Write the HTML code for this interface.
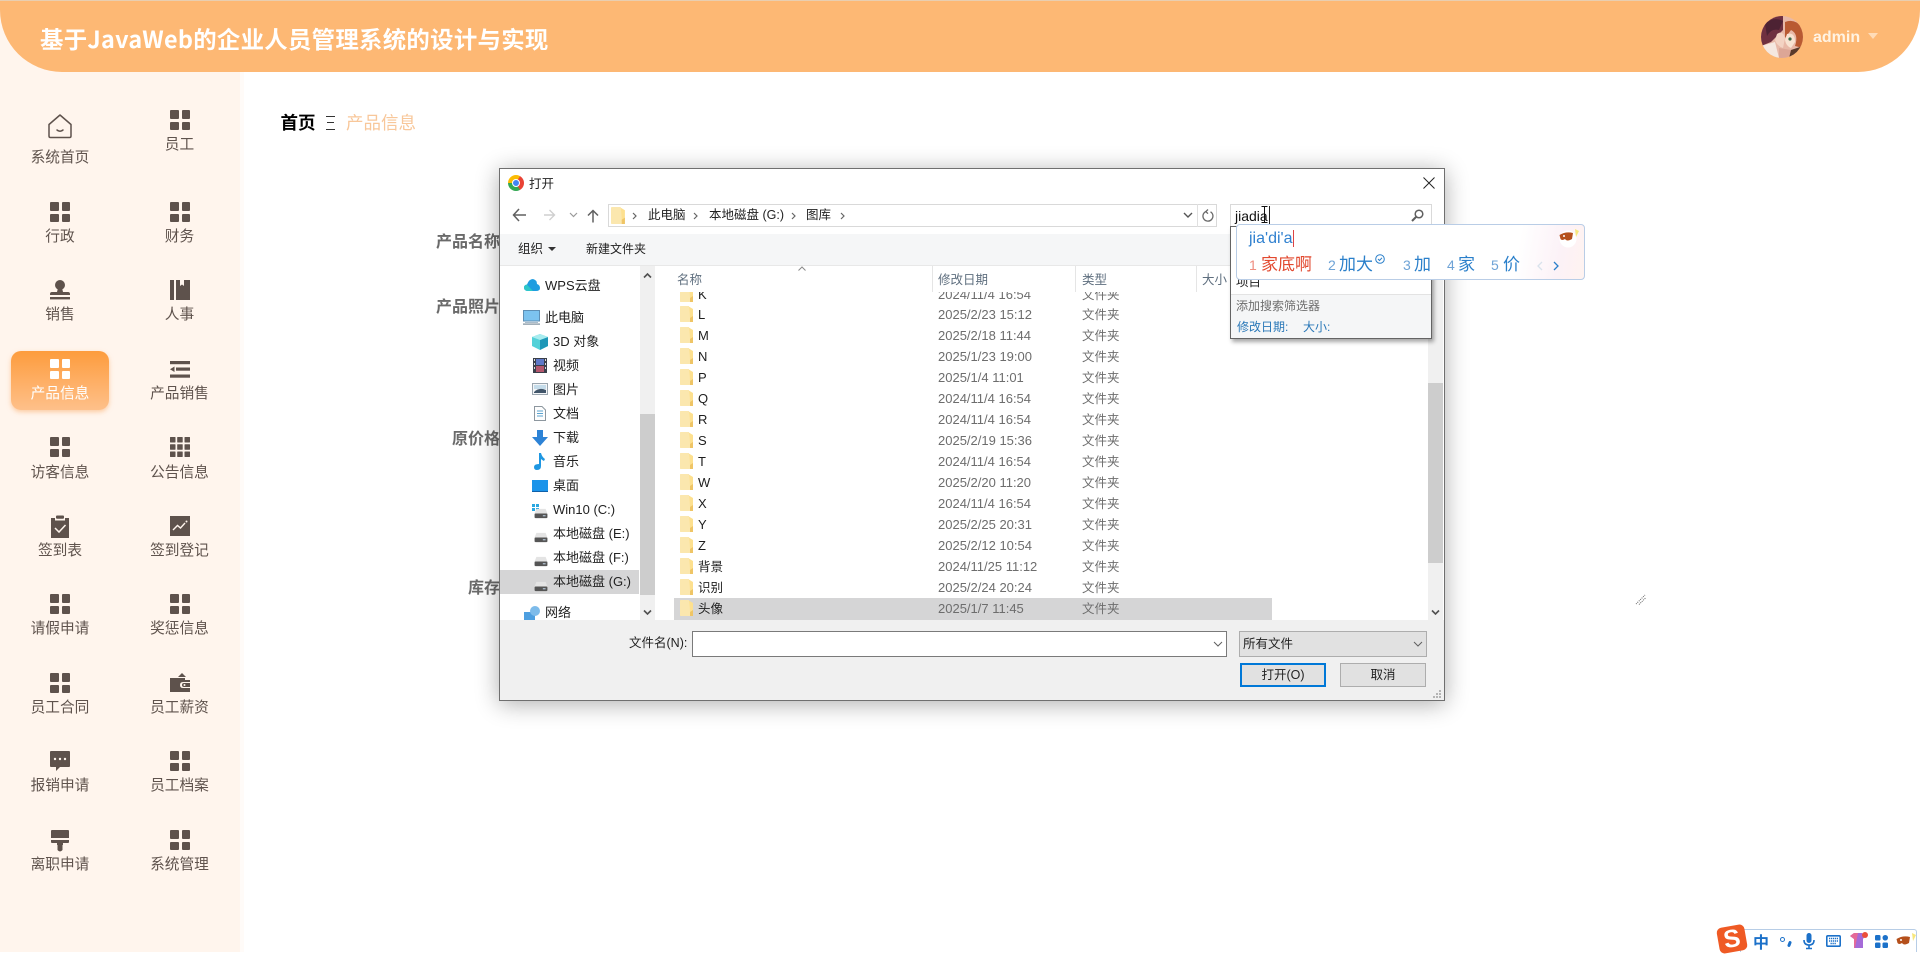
<!DOCTYPE html>
<html lang="zh-CN">
<head>
<meta charset="utf-8">
<title>产品信息</title>
<style>
*{box-sizing:border-box;margin:0;padding:0}
html,body{width:1920px;height:952px;overflow:hidden;background:#fff;font-family:"Liberation Sans","Noto Sans CJK SC",sans-serif}
.a{position:absolute}
.t{position:absolute;height:20px;line-height:20px;white-space:nowrap}
#hd{left:0;top:1px;width:1920px;height:71px;background:#fdb874;border-radius:0 0 62px 62px}
#side{left:0;top:0;width:240px;height:952px;background:#fff5ed}
.mi{position:absolute;width:120px;height:20px;line-height:20px;text-align:center;font-size:14.7px;color:#5f534d;white-space:nowrap;margin-top:1px}
.ic{position:absolute;width:20px;height:20px;fill:#5e524c}
.lb{font-size:16px;font-weight:700;color:#6a6a6a}
#dlg{left:499px;top:168px;width:946px;height:533px;background:#fff;border:1px solid #6f6f6f;box-shadow:0 3px 22px rgba(0,0,0,.32)}
.d{font-size:12.5px;color:#222}
.nm{font-size:13px;color:#1e1e1e;left:698px;margin-top:1px}
.dt{font-size:13px;color:#6d6d6d;left:938px;margin-top:1px}
.ty{font-size:12.5px;color:#6d6d6d;left:1082px;margin-top:1px}
.fd{position:absolute;left:680px;width:13px;height:16px}
.hh{font-size:12.5px;color:#5f6f7f;top:270px}
.sep{position:absolute;top:266px;width:1px;height:26px;background:#e5e5e5}
.nv{font-size:13px;color:#222;margin-top:1px}
.cand{font-size:17px;color:#2a7fca}
.num{font-size:14px;color:#6ea3d6}
</style>
</head>
<body>
<svg width="0" height="0" style="position:absolute">
<defs>
<symbol id="g" viewBox="0 0 20 20"><rect x="0" y="0" width="9" height="9" rx="1"/><rect x="12" y="0" width="8" height="9" rx="1"/><rect x="0" y="12" width="9" height="8" rx="1"/><rect x="12" y="12" width="8" height="8" rx="1"/></symbol>
<symbol id="f" viewBox="0 0 13 16"><path d="M0 1 Q0 0 1 0 H8 L13 3 V15 Q13 16 12 16 H1 Q0 16 0 15Z" fill="#fde08f"/><path d="M0 1 Q0 0 1 0 H9 Q10 8 10 13 L13 11 V15 Q13 16 12 16 H1 Q0 16 0 15Z" fill="#fbe7ae"/><path d="M10 16 V12 L13 10 V16Z" fill="#efc566"/></symbol>
<symbol id="dr" viewBox="0 0 16 12"><path d="M3 1 H13 L15 6 V11 H1 V6Z" fill="#e4e4e4"/><rect x="1" y="6" width="14" height="5" rx="1" fill="#555"/><rect x="10" y="8" width="3" height="1" fill="#cfe5f8"/></symbol>
</defs>
</svg>

<!-- main background -->
<div class="a" style="left:240px;top:72px;width:4px;height:880px;background:#fffbf8"></div>

<!-- sidebar -->
<div id="side" class="a"></div>

<!-- header -->
<div class="a" style="left:0;top:0;width:1920px;height:1px;background:#e9ceb0"></div>
<div id="hd" class="a"></div>
<div class="t" style="left:40px;top:26px;height:24px;line-height:24px;font-size:23.4px;font-weight:700;color:#fff;font-family:'Noto Sans CJK SC',sans-serif;letter-spacing:.3px">基于JavaWeb的企业人员管理系统的设计与实现</div>

<!-- avatar -->
<svg class="a" style="left:1761px;top:16px" width="42" height="42" viewBox="0 0 42 42">
<defs><clipPath id="av"><circle cx="21" cy="21" r="21"/></clipPath></defs>
<g clip-path="url(#av)">
<rect width="42" height="42" fill="#e8b9a8"/>
<path d="M0 0 H22 V14 L16 20 L10 26 L0 30Z" fill="#6f3040"/>
<path d="M4 8 Q12 0 22 5 L18 14 Q10 12 6 20Z" fill="#4d2233"/>
<path d="M24 6 Q34 2 42 12 V32 L34 30 Q38 18 30 14 L24 22Z" fill="#b95a32"/>
<path d="M16 18 Q22 14 24 22 L22 32 Q16 30 14 24Z" fill="#f3d3c3"/>
<path d="M26 18 Q34 16 34 26 L30 32 Q25 30 24 24Z" fill="#f8e3d2"/>
<path d="M0 30 L14 26 L18 42 H0Z" fill="#f5e8e0"/>
<path d="M18 32 L30 34 L28 42 H18Z" fill="#dca696"/>
<path d="M30 34 L42 30 V42 H28Z" fill="#5a3a2a"/>
<circle cx="29" cy="23" r="1.6" fill="#3a6a4a"/>
</g>
</svg>
<div class="t" style="left:1813px;top:28px;font-size:16px;font-weight:700;color:#fff3e3">admin</div>
<div class="a" style="left:1868px;top:33px;width:0;height:0;border-left:5.5px solid transparent;border-right:5.5px solid transparent;border-top:6px solid #ffdcb8"></div>

<!-- sidebar active -->
<div class="a" style="left:11px;top:351px;width:98px;height:59px;border-radius:10px;background:linear-gradient(#fd9c3d,#fec08a);box-shadow:0 2px 5px rgba(250,170,100,.55)"></div>

<!-- menu icons -->
<svg class="a" style="left:48px;top:114px" width="24" height="25" viewBox="0 0 24 25" fill="none" stroke="#5e524c" stroke-width="1.5"><path d="M1 10.5 L12 1 L23 10.5 V22 Q23 23.5 21.5 23.5 H2.5 Q1 23.5 1 22Z" stroke-linejoin="round"/><path d="M9 16 Q12 18.5 15 16" stroke-linecap="round"/></svg>
<svg class="ic" style="left:169.5px;top:110px"><use href="#g"/></svg>
<svg class="ic" style="left:50px;top:202px"><use href="#g"/></svg>
<svg class="ic" style="left:169.5px;top:202px"><use href="#g"/></svg>
<svg class="ic" style="left:50px;top:280px" viewBox="0 0 20 20"><circle cx="10" cy="5" r="5"/><path d="M8 8 H12 L13 12 H18 Q20 12 20 14 V15 H0 V14 Q0 12 2 12 H7Z"/><rect x="0" y="17" width="20" height="2.4"/></svg>
<svg class="ic" style="left:169.5px;top:280px" viewBox="0 0 20 20"><rect x="0" y="0" width="4" height="20"/><path d="M6 0 H10 V6 L12 4.5 L14 6 V0 H20 V20 H6Z"/></svg>
<svg class="ic" style="left:50px;top:359px;fill:#fff"><use href="#g"/></svg>
<svg class="ic" style="left:169.5px;top:361px" viewBox="0 0 20 20"><rect x="0" y="0" width="20" height="3.2"/><rect x="6" y="6.5" width="14" height="3.2"/><path d="M4.5 5.5 V11 L0 8.2Z"/><rect x="0" y="13.5" width="20" height="3.2"/></svg>
<svg class="ic" style="left:50px;top:437px"><use href="#g"/></svg>
<svg class="ic" style="left:169.5px;top:437px" viewBox="0 0 20 20"><rect x="0" y="0" width="5.5" height="5.5" rx=".5"/><rect x="7.2" y="0" width="5.5" height="5.5" rx=".5"/><rect x="14.5" y="0" width="5.5" height="5.5" rx=".5"/><rect x="0" y="7.2" width="5.5" height="5.5" rx=".5"/><rect x="7.2" y="7.2" width="5.5" height="5.5" rx=".5"/><rect x="14.5" y="7.2" width="5.5" height="5.5" rx=".5"/><rect x="0" y="14.5" width="5.5" height="5.5" rx=".5"/><rect x="7.2" y="14.5" width="5.5" height="5.5" rx=".5"/><rect x="14.5" y="14.5" width="5.5" height="5.5" rx=".5"/></svg>
<svg class="a" style="left:50px;top:515px" width="20" height="23" viewBox="0 0 20 23"><path d="M1 3 H5 V5.5 H15 V3 H19 V23 H1Z" fill="#5e524c"/><rect x="6" y="0.5" width="8" height="3.2" rx="1" fill="#5e524c"/><path d="M5 13 L9 17 L15.5 10" fill="none" stroke="#fff5ed" stroke-width="1.5"/></svg>
<svg class="ic" style="left:169.5px;top:516px" viewBox="0 0 20 20"><path d="M0 0H20V20H0Z"/><path d="M3 14 L7.5 9.5 L10.5 12 L15 7" fill="none" stroke="#fff5ed" stroke-width="1.4"/><circle cx="16.5" cy="5.5" r="1" fill="#fff5ed"/></svg>
<svg class="ic" style="left:50px;top:594px"><use href="#g"/></svg>
<svg class="ic" style="left:169.5px;top:594px"><use href="#g"/></svg>
<svg class="ic" style="left:50px;top:673px"><use href="#g"/></svg>
<svg class="ic" style="left:169.5px;top:673px" viewBox="0 0 20 20"><path d="M8 4 L12 0 L16 4Z"/><path d="M0 5 H15 V7 H20 V9 H13 Q10 9 10 12 Q10 15 13 15 H20 V19 H0Z"/><path d="M20 10 H14 Q12 10 12 12 Q12 14 14 14 H20Z"/><circle cx="14.5" cy="12" r="1" fill="#fff5ed"/></svg>
<svg class="ic" style="left:50px;top:751px" viewBox="0 0 20 20"><path d="M1 0 H19 Q20 0 20 1 V15 Q20 16 19 16 H10 L6 20 V16 H1 Q0 16 0 15 V1 Q0 0 1 0Z"/><circle cx="5" cy="8" r="1.2" fill="#fff5ed"/><circle cx="10" cy="8" r="1.2" fill="#fff5ed"/><circle cx="15" cy="8" r="1.2" fill="#fff5ed"/></svg>
<svg class="ic" style="left:169.5px;top:751px"><use href="#g"/></svg>
<svg class="ic" style="left:51px;top:830px;width:18px;height:22px" viewBox="0 0 18 22"><path d="M1 0 H17 Q18 0 18 1 V8 H0 V1 Q0 0 1 0Z"/><path d="M0 10 H18 V12 Q18 13 17 13 H12 V15 H6 V13 H1 Q0 13 0 12Z"/><path d="M6.5 15 H11.5 V20 Q9 23 6.5 20Z"/></svg>
<svg class="ic" style="left:169.5px;top:830px"><use href="#g"/></svg>

<!-- menu labels -->
<div class="mi" style="left:0;top:147px">系统首页</div>
<div class="mi" style="left:119.5px;top:134px">员工</div>
<div class="mi" style="left:0;top:226px">行政</div>
<div class="mi" style="left:119.5px;top:226px">财务</div>
<div class="mi" style="left:0;top:304px">销售</div>
<div class="mi" style="left:119.5px;top:304px">人事</div>
<div class="mi" style="left:0;top:383px;color:#fff">产品信息</div>
<div class="mi" style="left:119.5px;top:383px">产品销售</div>
<div class="mi" style="left:0;top:462px">访客信息</div>
<div class="mi" style="left:119.5px;top:462px">公告信息</div>
<div class="mi" style="left:0;top:540px">签到表</div>
<div class="mi" style="left:119.5px;top:540px">签到登记</div>
<div class="mi" style="left:0;top:618px">请假申请</div>
<div class="mi" style="left:119.5px;top:618px">奖惩信息</div>
<div class="mi" style="left:0;top:697px">员工合同</div>
<div class="mi" style="left:119.5px;top:697px">员工薪资</div>
<div class="mi" style="left:0;top:775px">报销申请</div>
<div class="mi" style="left:119.5px;top:775px">员工档案</div>
<div class="mi" style="left:0;top:854px">离职申请</div>
<div class="mi" style="left:119.5px;top:854px">系统管理</div>

<!-- breadcrumb -->
<div class="t" style="left:280.5px;top:113px;font-size:17.5px;font-weight:700;color:#000">首页</div>
<div class="a" style="left:326px;top:116px;width:9px;height:14px;border-top:1.5px solid #333;border-bottom:1.5px solid #333"><div style="margin:4.5px 1px 0;height:1.5px;background:#333"></div></div>
<div class="t" style="left:346px;top:113px;font-size:17.5px;color:#f8c79a">产品信息</div>

<!-- form labels behind -->
<div class="t lb" style="left:436px;top:233px">产品名称</div>
<div class="t lb" style="left:436px;top:298px">产品照片</div>
<div class="t lb" style="left:452px;top:430px">原价格</div>
<div class="t lb" style="left:468px;top:579px">库存</div>
<svg class="a" style="left:1634px;top:592px" width="14" height="14" viewBox="0 0 14 14" stroke="#666" stroke-dasharray="1 1"><path d="M2 12 L11 3"/><path d="M5 12.5 L12 5.5"/></svg>

<!-- dialog -->
<div id="dlg" class="a"></div>
<!-- title -->
<div class="a" style="left:508px;top:175px;width:16px;height:16px;border-radius:50%;background:conic-gradient(from 30deg,#e94235 0 120deg,#34a853 120deg 240deg,#fbbc04 240deg 360deg)"></div>
<div class="a" style="left:512px;top:179px;width:8px;height:8px;border-radius:50%;background:#4285f4;border:1.2px solid #fff"></div>
<div class="t d" style="left:529px;top:174px">打开</div>
<svg class="a" style="left:1423px;top:177px" width="12" height="12" viewBox="0 0 12 12" stroke="#222" stroke-width="1"><path d="M.5 .5 L11.5 11.5 M11.5 .5 L.5 11.5"/></svg>

<!-- nav buttons -->
<svg class="a" style="left:512px;top:208px" width="15" height="14" viewBox="0 0 15 14" fill="none" stroke="#606060" stroke-width="1.5"><path d="M7 1 L1.5 7 L7 13 M1.5 7 H14"/></svg>
<svg class="a" style="left:543px;top:209px" width="13" height="12" viewBox="0 0 13 12" fill="none" stroke="#cfcfcf" stroke-width="1.4"><path d="M6.5 1 L11.5 6 L6.5 11 M11.5 6 H1"/></svg>
<svg class="a" style="left:569px;top:212px" width="9" height="6" viewBox="0 0 9 6" fill="none" stroke="#9a9a9a" stroke-width="1.2"><path d="M1 1 L4.5 4.5 L8 1"/></svg>
<svg class="a" style="left:587px;top:209px" width="12" height="14" viewBox="0 0 12 14" fill="none" stroke="#606060" stroke-width="1.5"><path d="M1 6.5 L6 1.5 L11 6.5 M6 1.5 V13.5"/></svg>

<!-- address bar -->
<div class="a" style="left:608px;top:204px;width:609px;height:23px;border:1px solid #d9d9d9;background:#fff"></div>
<svg class="a" style="left:611px;top:207px;width:14px;height:17px"><use href="#f"/></svg>
<svg class="a" style="left:632px;top:212px" width="5" height="8" viewBox="0 0 5 8" fill="none" stroke="#666" stroke-width="1.2"><path d="M1 1 L4 4 L1 7"/></svg>
<div class="t d" style="left:648px;top:205px">此电脑</div>
<svg class="a" style="left:693px;top:212px" width="5" height="8" viewBox="0 0 5 8" fill="none" stroke="#666" stroke-width="1.2"><path d="M1 1 L4 4 L1 7"/></svg>
<div class="t d" style="left:709px;top:205px">本地磁盘 (G:)</div>
<svg class="a" style="left:791px;top:212px" width="5" height="8" viewBox="0 0 5 8" fill="none" stroke="#666" stroke-width="1.2"><path d="M1 1 L4 4 L1 7"/></svg>
<div class="t d" style="left:806px;top:205px">图库</div>
<svg class="a" style="left:840px;top:212px" width="5" height="8" viewBox="0 0 5 8" fill="none" stroke="#666" stroke-width="1.2"><path d="M1 1 L4 4 L1 7"/></svg>
<svg class="a" style="left:1183px;top:212px" width="10" height="7" viewBox="0 0 10 7" fill="none" stroke="#555" stroke-width="1.4"><path d="M1 1 L5 5 L9 1"/></svg>
<div class="a" style="left:1197px;top:204px;width:1px;height:23px;background:#e0e0e0"></div>
<svg class="a" style="left:1202px;top:209px" width="12" height="13" viewBox="0 0 12 13" fill="none" stroke="#6a6a6a" stroke-width="1.3"><path d="M4 2.5 A5 5 0 1 0 8.5 2.8"/><path d="M6 .5 L3.8 2.6 L6 4.6"/></svg>

<!-- search box -->
<div class="a" style="left:1230px;top:204px;width:202px;height:23px;border:1px solid #d9d9d9;background:#fff"></div>
<div class="t" style="left:1235px;top:206px;font-size:14px;color:#111">jiadia</div>
<div class="a" style="left:1269px;top:206px;width:1px;height:19px;background:#222"></div>
<svg class="a" style="left:1411px;top:209px" width="13" height="13" viewBox="0 0 13 13" fill="none" stroke="#5f5f5f" stroke-width="1.5"><circle cx="8" cy="5" r="3.8"/><path d="M5 8 L1 12" stroke-width="2"/></svg>

<!-- toolbar -->
<div class="a" style="left:500px;top:234px;width:944px;height:31px;background:#f5f6f7"></div>
<div class="a" style="left:500px;top:265px;width:944px;height:1px;background:#e8e8e8"></div>
<div class="t d" style="left:518px;top:239px">组织</div>
<div class="a" style="left:548px;top:247px;width:0;height:0;border-left:4px solid transparent;border-right:4px solid transparent;border-top:4px solid #333"></div>
<div class="t d" style="left:586px;top:239px;font-size:12px">新建文件夹</div>

<!-- nav pane scrollbar -->
<div class="a" style="left:640px;top:266px;width:15px;height:354px;background:#f0f0f0"></div>
<div class="a" style="left:640px;top:414px;width:15px;height:181px;background:#cdcdcd"></div>
<svg class="a" style="left:643px;top:272px" width="9" height="7" viewBox="0 0 9 7" fill="none" stroke="#505050" stroke-width="1.6"><path d="M1 5.5 L4.5 2 L8 5.5"/></svg>
<svg class="a" style="left:643px;top:609px" width="9" height="7" viewBox="0 0 9 7" fill="none" stroke="#505050" stroke-width="1.6"><path d="M1 1.5 L4.5 5 L8 1.5"/></svg>

<!-- nav items -->
<svg class="a" style="left:524px;top:279px" width="16" height="12" viewBox="0 0 16 12"><path d="M4 12 Q0 12 0 8.5 Q0 6 3 5.5 Q5 0 9 0 Q13 1 13 5 Q16 6 16 9 Q16 12 12 12Z" fill="#1f9de0"/><path d="M4 12 Q0 12 0 8.5 Q0 6 3 5.5 Q5 8 9 12Z" fill="#2cc7c9"/></svg>
<div class="t nv" style="left:545px;top:275px">WPS云盘</div>
<svg class="a" style="left:523px;top:310px" width="17" height="15" viewBox="0 0 17 15"><rect x="0.5" y="0.5" width="16" height="10.5" fill="#7cc3ef" stroke="#5e8fb4"/><rect x="2" y="12" width="13" height="1" fill="#a9bccb"/><rect x="0" y="13.5" width="17" height="1.2" fill="#7b8d9b"/></svg>
<div class="t nv" style="left:545px;top:307px">此电脑</div>
<svg class="a" style="left:532px;top:334px" width="16" height="16" viewBox="0 0 16 16"><path d="M8 0 L16 3 V12 L8 16 L0 12 V3Z" fill="#53d1d8"/><path d="M8 6 L16 3 V12 L8 16Z" fill="#1e97b7"/><path d="M0 3 L8 0 L16 3 L8 6Z" fill="#a8ecef"/></svg>
<div class="t nv" style="left:553px;top:331px">3D 对象</div>
<svg class="a" style="left:533px;top:358px" width="14" height="15" viewBox="0 0 14 15"><rect width="14" height="15" fill="#3a3f4a"/><rect x="3" y="1" width="8" height="6" fill="#5e78c8"/><rect x="3" y="8" width="8" height="6" fill="#b3576e"/><path d="M1 1h1v2h-1zM1 5h1v2h-1zM1 9h1v2h-1zM12 1h1v2h-1zM12 5h1v2h-1zM12 9h1v2h-1z" fill="#ddd"/></svg>
<div class="t nv" style="left:553px;top:355px">视频</div>
<svg class="a" style="left:532px;top:383px" width="16" height="12" viewBox="0 0 16 12"><rect x=".5" y=".5" width="15" height="11" fill="#f4f6f8" stroke="#9aa5ae"/><rect x="2" y="2" width="12" height="4" fill="#c5dcea"/><path d="M2 9 Q7 4 14 7 V10 H2Z" fill="#42566a"/></svg>
<div class="t nv" style="left:553px;top:379px">图片</div>
<svg class="a" style="left:534px;top:406px" width="12" height="15" viewBox="0 0 12 15"><path d="M.5 .5 H8 L11.5 4 V14.5 H.5Z" fill="#fdfdfd" stroke="#8d979f"/><path d="M3 5h6M3 7.5h6M3 10h6" stroke="#5aa3d0"/></svg>
<div class="t nv" style="left:553px;top:403px">文档</div>
<svg class="a" style="left:532px;top:430px" width="16" height="16" viewBox="0 0 16 16"><path d="M5 0 H11 V7 H16 L8 16 L0 7 H5Z" fill="#2d83d6"/></svg>
<div class="t nv" style="left:553px;top:427px">下载</div>
<svg class="a" style="left:534px;top:453px" width="12" height="17" viewBox="0 0 12 17"><path d="M5 0 L7 0 Q8 4 11 6 L10 8 Q8 7 7 6 V13 Q7 17 3 17 Q0 17 0 14 Q0 11 5 11Z" fill="#1e97e2"/></svg>
<div class="t nv" style="left:553px;top:451px">音乐</div>
<div class="a" style="left:532px;top:480px;width:16px;height:12px;background:#1b94ea;border-bottom:1px solid #1060a8"></div>
<div class="t nv" style="left:553px;top:475px">桌面</div>
<div class="a" style="left:532px;top:504px;width:3px;height:3px;background:#2aa7e0;box-shadow:4px 0 #2aa7e0,0 4px #2aa7e0,4px 4px #2aa7e0"></div>
<svg class="a" style="left:533px;top:508px;width:16px;height:11px"><use href="#dr"/></svg>
<div class="t nv" style="left:553px;top:499px">Win10 (C:)</div>
<svg class="a" style="left:533px;top:532px;width:16px;height:11px"><use href="#dr"/></svg>
<div class="t nv" style="left:553px;top:523px">本地磁盘 (E:)</div>
<svg class="a" style="left:533px;top:556px;width:16px;height:11px"><use href="#dr"/></svg>
<div class="t nv" style="left:553px;top:547px">本地磁盘 (F:)</div>
<div class="a" style="left:500px;top:570px;width:139px;height:24px;background:#d5d5d6"></div>
<svg class="a" style="left:533px;top:581px;width:16px;height:11px"><use href="#dr"/></svg>
<div class="t nv" style="left:553px;top:571px">本地磁盘 (G:)</div>
<svg class="a" style="left:524px;top:606px" width="16" height="14" viewBox="0 0 16 14"><rect x="0" y="6" width="11" height="8" fill="#4e9fe0"/><circle cx="11" cy="5" r="5" fill="#7dbbea"/></svg>
<div class="t nv" style="left:545px;top:604px;height:16px;overflow:hidden;line-height:18px;margin-top:0">网络</div>

<!-- file list header -->
<div class="t hh" style="left:677px">名称</div>
<svg class="a" style="left:798px;top:266px" width="8" height="5" viewBox="0 0 8 5" fill="none" stroke="#8a8a8a"><path d="M.5 4.5 L4 1 L7.5 4.5"/></svg>
<div class="sep" style="left:932px"></div>
<div class="t hh" style="left:938px">修改日期</div>
<div class="sep" style="left:1075px"></div>
<div class="t hh" style="left:1082px">类型</div>
<div class="sep" style="left:1196px"></div>
<div class="t hh" style="left:1202px">大小</div>

<!-- file rows -->
<div class="a" style="left:676px;top:292px;width:752px;height:10px;overflow:hidden">
<div class="t nm" style="left:22px;top:-8px">K</div>
<svg class="a" style="left:4px;top:-6px;width:13px;height:16px"><use href="#f"/></svg>
<div class="t dt" style="left:262px;top:-8px">2024/11/4 16:54</div>
<div class="t ty" style="left:406px;top:-8px">文件夹</div>
</div>
<div class="a" style="left:674px;top:598px;width:598px;height:22px;background:#d5d5d6"></div>

<svg class="fd" style="top:306px"><use href="#f"/></svg><div class="t nm" style="top:304px">L</div><div class="t dt" style="top:304px">2025/2/23 15:12</div><div class="t ty" style="top:304px">文件夹</div>
<svg class="fd" style="top:327px"><use href="#f"/></svg><div class="t nm" style="top:325px">M</div><div class="t dt" style="top:325px">2025/2/18 11:44</div><div class="t ty" style="top:325px">文件夹</div>
<svg class="fd" style="top:348px"><use href="#f"/></svg><div class="t nm" style="top:346px">N</div><div class="t dt" style="top:346px">2025/1/23 19:00</div><div class="t ty" style="top:346px">文件夹</div>
<svg class="fd" style="top:369px"><use href="#f"/></svg><div class="t nm" style="top:367px">P</div><div class="t dt" style="top:367px">2025/1/4 11:01</div><div class="t ty" style="top:367px">文件夹</div>
<svg class="fd" style="top:390px"><use href="#f"/></svg><div class="t nm" style="top:388px">Q</div><div class="t dt" style="top:388px">2024/11/4 16:54</div><div class="t ty" style="top:388px">文件夹</div>
<svg class="fd" style="top:411px"><use href="#f"/></svg><div class="t nm" style="top:409px">R</div><div class="t dt" style="top:409px">2024/11/4 16:54</div><div class="t ty" style="top:409px">文件夹</div>
<svg class="fd" style="top:432px"><use href="#f"/></svg><div class="t nm" style="top:430px">S</div><div class="t dt" style="top:430px">2025/2/19 15:36</div><div class="t ty" style="top:430px">文件夹</div>
<svg class="fd" style="top:453px"><use href="#f"/></svg><div class="t nm" style="top:451px">T</div><div class="t dt" style="top:451px">2024/11/4 16:54</div><div class="t ty" style="top:451px">文件夹</div>
<svg class="fd" style="top:474px"><use href="#f"/></svg><div class="t nm" style="top:472px">W</div><div class="t dt" style="top:472px">2025/2/20 11:20</div><div class="t ty" style="top:472px">文件夹</div>
<svg class="fd" style="top:495px"><use href="#f"/></svg><div class="t nm" style="top:493px">X</div><div class="t dt" style="top:493px">2024/11/4 16:54</div><div class="t ty" style="top:493px">文件夹</div>
<svg class="fd" style="top:516px"><use href="#f"/></svg><div class="t nm" style="top:514px">Y</div><div class="t dt" style="top:514px">2025/2/25 20:31</div><div class="t ty" style="top:514px">文件夹</div>
<svg class="fd" style="top:537px"><use href="#f"/></svg><div class="t nm" style="top:535px">Z</div><div class="t dt" style="top:535px">2025/2/12 10:54</div><div class="t ty" style="top:535px">文件夹</div>
<svg class="fd" style="top:558px"><use href="#f"/></svg><div class="t nm" style="top:556px;font-size:12.5px">背景</div><div class="t dt" style="top:556px">2024/11/25 11:12</div><div class="t ty" style="top:556px">文件夹</div>
<svg class="fd" style="top:579px"><use href="#f"/></svg><div class="t nm" style="top:577px;font-size:12.5px">识别</div><div class="t dt" style="top:577px">2025/2/24 20:24</div><div class="t ty" style="top:577px">文件夹</div>
<svg class="fd" style="top:600px"><use href="#f"/></svg><div class="t nm" style="top:598px;font-size:12.5px">头像</div><div class="t dt" style="top:598px">2025/1/7 11:45</div><div class="t ty" style="top:598px">文件夹</div>

<!-- right scrollbar -->
<div class="a" style="left:1428px;top:266px;width:15px;height:354px;background:#f0f0f0"></div>
<div class="a" style="left:1428px;top:383px;width:15px;height:180px;background:#cdcdcd"></div>
<svg class="a" style="left:1431px;top:609px" width="9" height="7" viewBox="0 0 9 7" fill="none" stroke="#505050" stroke-width="1.6"><path d="M1 1.5 L4.5 5 L8 1.5"/></svg>

<!-- bottom -->
<div class="a" style="left:500px;top:620px;width:944px;height:80px;background:#f0f0f0"></div>
<div class="t d" style="left:629px;top:633px">文件名(N):</div>
<div class="a" style="left:692px;top:631px;width:535px;height:26px;background:#fff;border:1px solid #7a7a7a"></div>
<svg class="a" style="left:1213px;top:641px" width="10" height="6" viewBox="0 0 10 6" fill="none" stroke="#606060"><path d="M1 1 L5 5 L9 1"/></svg>
<div class="a" style="left:1239px;top:631px;width:188px;height:26px;background:#e1e1e1;border:1px solid #adadad"></div>
<div class="t d" style="left:1243px;top:634px">所有文件</div>
<svg class="a" style="left:1413px;top:641px" width="10" height="6" viewBox="0 0 10 6" fill="none" stroke="#606060"><path d="M1 1 L5 5 L9 1"/></svg>
<div class="a" style="left:1240px;top:663px;width:86px;height:24px;background:#e1e1e1;border:2px solid #0078d7;text-align:center;font-size:12.5px;line-height:20px;color:#222">打开(O)</div>
<div class="a" style="left:1340px;top:663px;width:86px;height:24px;background:#e1e1e1;border:1px solid #adadad;text-align:center;font-size:12.5px;line-height:22px;color:#222">取消</div>
<svg class="a" style="left:1432px;top:689px" width="10" height="10" viewBox="0 0 10 10" fill="#b4b4b4"><rect x="7" y="1" width="2" height="2"/><rect x="4" y="4" width="2" height="2"/><rect x="7" y="4" width="2" height="2"/><rect x="1" y="7" width="2" height="2"/><rect x="4" y="7" width="2" height="2"/><rect x="7" y="7" width="2" height="2"/></svg>

<!-- search suggestion dropdown -->
<div class="a" style="left:1230px;top:226px;width:202px;height:113px;background:#fff;border:1px solid #646464;box-shadow:2px 3px 4px rgba(0,0,0,.35)"></div>
<div class="t" style="left:1236px;top:272px;font-size:12.5px;color:#222">项目</div>
<div class="a" style="left:1231px;top:294px;width:200px;height:44px;background:#f5f6f7;border-top:1px solid #e3e3e3"></div>
<div class="t" style="left:1236px;top:296px;font-size:12px;color:#6d6d6d">添加搜索筛选器</div>
<div class="t" style="left:1237px;top:317px;font-size:12px;color:#2a78b8">修改日期:</div>
<div class="t" style="left:1303px;top:317px;font-size:12px;color:#2a78b8">大小:</div>

<!-- IME popup -->
<div class="a" style="left:1236px;top:224px;width:349px;height:56px;background:linear-gradient(100deg,#fff 80%,#fcf2f7 92%,#fff3f0);border:1px solid #b9cde6;border-radius:4px"></div>
<div class="t" style="left:1249px;top:229px;font-size:16px;color:#2f80cf">jia'di'a</div>
<div class="a" style="left:1293px;top:230px;width:1px;height:17px;background:#d44"></div>
<div class="t num" style="left:1249px;top:255px;color:#ef8d80">1</div>
<div class="t cand" style="left:1261px;top:255px;color:#e2492f">家底啊</div>
<div class="t num" style="left:1328px;top:255px">2</div>
<div class="t cand" style="left:1339px;top:255px">加大</div>
<svg class="a" style="left:1375px;top:254px" width="10" height="10" viewBox="0 0 10 10" fill="none" stroke="#2a7fca"><circle cx="5" cy="5" r="4.3"/><path d="M3 5 L4.5 6.5 L7 3.8"/></svg>
<div class="t num" style="left:1403px;top:255px">3</div>
<div class="t cand" style="left:1414px;top:255px">加</div>
<div class="t num" style="left:1447px;top:255px">4</div>
<div class="t cand" style="left:1458px;top:255px">家</div>
<div class="t num" style="left:1491px;top:255px">5</div>
<div class="t cand" style="left:1503px;top:255px">价</div>
<svg class="a" style="left:1537px;top:261px" width="6" height="10" viewBox="0 0 6 10" fill="none" stroke="#d9e2ec" stroke-width="1.3"><path d="M5 1 L1 5 L5 9"/></svg>
<svg class="a" style="left:1553px;top:261px" width="6" height="10" viewBox="0 0 6 10" fill="none" stroke="#2a7fca" stroke-width="1.3"><path d="M1 1 L5 5 L1 9"/></svg>
<svg class="a" style="left:1558px;top:228px" width="22" height="20" viewBox="0 0 22 20"><circle cx="10" cy="11" r="8.5" fill="#fff"/><path d="M1.5 7 Q8 3 15 5 L14 11 Q9 14 7 11 Q4 13 2.5 11Z" fill="#b5501c"/><circle cx="6" cy="8" r="1" fill="#fff"/><path d="M17 1 L21 3 L18 9Z" fill="#f7e77c"/></svg>

<!-- mouse cursor -->
<svg class="a" style="left:1261px;top:206px" width="7" height="17" viewBox="0 0 7 17" fill="none" stroke="#111"><path d="M.5 .5 H6.5 M3.5 .5 V16.5 M.5 16.5 H6.5"/></svg>

<!-- sogou tray -->
<div class="a" style="left:1740px;top:929px;width:177px;height:23px;background:#fff;border:1px solid #b7cde6;border-bottom:none;border-radius:3px 3px 0 0"></div>
<div class="a" style="left:1718px;top:926px;width:28px;height:26px;background:#ef5a24;border-radius:5px;transform:rotate(-10deg);color:#fff;font-size:25px;font-weight:900;line-height:26px;text-align:center">S</div>
<div class="t" style="left:1753px;top:931px;font-size:16px;font-weight:700;color:#1c71c9;font-family:'Noto Sans CJK SC',sans-serif">中</div>
<div class="a" style="left:1780px;top:937px;width:5px;height:5px;border:1.5px solid #1c71c9;border-radius:50%"></div>
<div class="a" style="left:1788px;top:941px;width:3px;height:6px;background:#1c71c9;border-radius:2px;transform:rotate(20deg)"></div>
<svg class="a" style="left:1803px;top:933px" width="12" height="17" viewBox="0 0 12 17" fill="none" stroke="#1c71c9" stroke-width="1.6"><rect x="3.5" y="0" width="5" height="10" rx="2.5" fill="#1c71c9" stroke="none"/><path d="M1 7 Q1 12 6 12 Q11 12 11 7 M6 12 V15 M3 15.5 H9"/></svg>
<svg class="a" style="left:1826px;top:935px" width="15" height="12" viewBox="0 0 15 12"><rect x=".8" y=".8" width="13.4" height="10.4" rx="1" fill="none" stroke="#1c71c9" stroke-width="1.6"/><path d="M3 3.5h9M3 6h9M4.5 8.5h6" stroke="#1c71c9" stroke-width="1.4" stroke-dasharray="1.3 .7"/></svg>
<svg class="a" style="left:1850px;top:932px" width="19" height="17" viewBox="0 0 19 17"><path d="M0 4 L4 1 H12 L15 4 L13 7 V16 H4 V7Z" fill="#a56bd8"/><path d="M4 1 H8 L5 16 H4 V7 L0 4Z" fill="#e56a98"/><circle cx="15" cy="3" r="3" fill="#ec4f3a"/></svg>
<svg class="a" style="left:1875px;top:935px" width="13" height="13" viewBox="0 0 13 13" fill="#1c71c9"><rect width="5.5" height="5.5" rx="1.4"/><rect x="7.5" width="5.5" height="5.5" rx="2.7"/><rect y="7.5" width="5.5" height="5.5" rx="1.4"/><rect x="7.5" y="7.5" width="5.5" height="5.5" rx="1.4"/></svg>
<svg class="a" style="left:1895px;top:932px" width="22" height="20" viewBox="0 0 22 20"><circle cx="10" cy="11" r="8.5" fill="#fff"/><path d="M1.5 7 Q8 3 15 5 L14 11 Q9 14 7 11 Q4 13 2.5 11Z" fill="#b5501c"/><circle cx="6" cy="8" r="1" fill="#fff"/><path d="M17 1 L21 3 L18 9Z" fill="#f7e77c"/></svg>
</body>
</html>
